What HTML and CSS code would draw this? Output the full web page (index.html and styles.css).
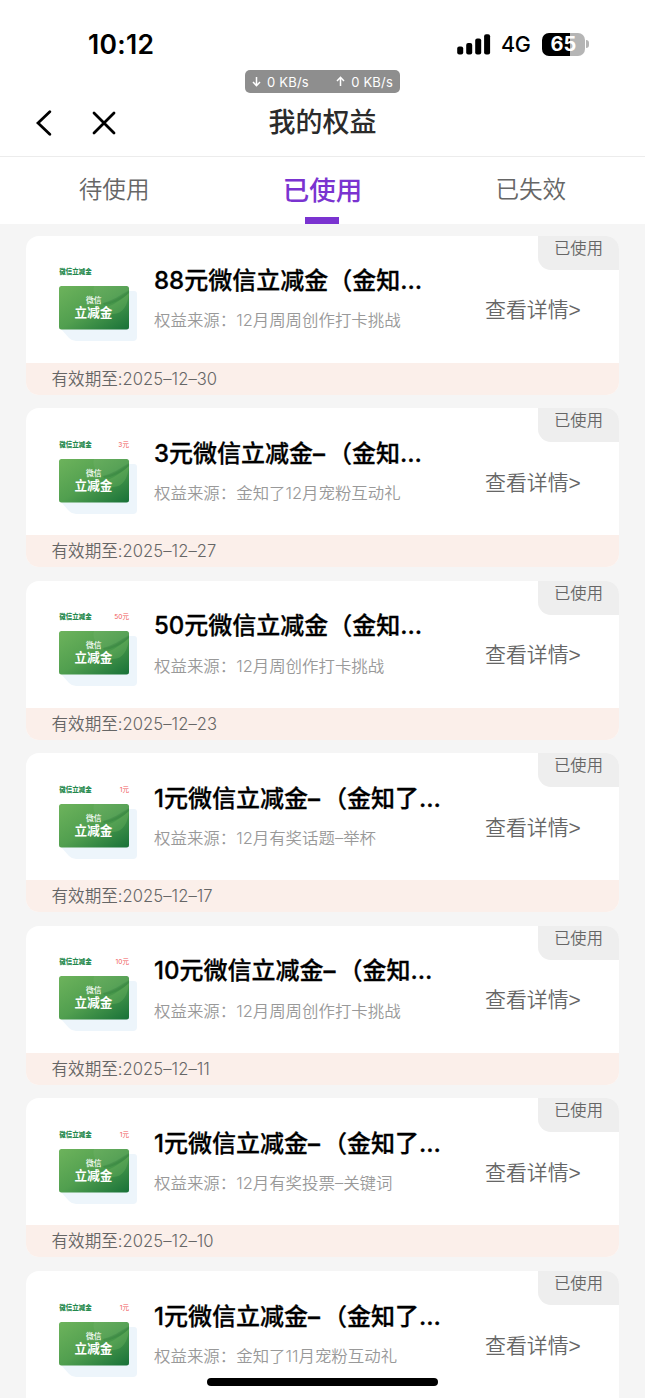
FILE: index.html
```html
<!DOCTYPE html>
<html lang="zh-CN">
<head>
  <meta charset="UTF-8" />
  <meta name="viewport" content="width=device-width, initial-scale=1.0" />
  <title>我的权益</title>
  <link rel="stylesheet" href="styles.css">
</head>
<body>

  <!-- Shared voucher artwork -->
  <svg class="defs" width="0" height="0">
    <defs>
      <linearGradient id="green" x1="0" y1="0" x2="1" y2="1">
        <stop offset="0" stop-color="#6db35c" />
        <stop offset="0.5" stop-color="#519f4f" />
        <stop offset="1" stop-color="#187138" />
      </linearGradient>
      <clipPath id="cardClip"><rect x="9" y="31" width="70" height="43.5" rx="2.5" /></clipPath>
      <symbol id="voucher" viewBox="0 0 96 96">
        <path d="M11 74 L79 36 H84 Q87 36 87 39 V82 Q87 86 83 86 H26 Q22 86 19 83 Z" fill="#edf5fb" />
        <rect x="9" y="31" width="70" height="43.5" rx="2.5" fill="url(#green)" />
        <g clip-path="url(#cardClip)">
          <path d="M44 31 C42 37 45 43 53 48 C60 48 68 44 79 36 V31 Z" fill="#ffffff" opacity="0.05" />
          <path d="M48 55 C58 53 69 47 79 38 C78 50 73 59 63 59 C57 60 52 58 48 55 Z" fill="#8dce72" opacity="0.22" />
          <path d="M53 48 C62 46 71 40 79 35 V38 C71 45 63 49 54 50 Z" fill="#16602e" opacity="0.18" />
        </g>
        <text x="9.2" y="19" class="v-label">微信立减金</text>
        <text x="43.7" y="48.4" class="v-small">微信</text>
        <text x="43.5" y="61.5" class="v-big">立减金</text>
      </symbol>
    </defs>
  </svg>

  <!-- Status bar -->
  <div class="status-bar">
    <span class="time">10:12</span>
    <div class="status-right">
      <svg class="signal" width="34" height="21" viewBox="0 0 34 21">
        <rect x="0.2" y="12.6" width="6" height="8" rx="2" />
        <rect x="9.2" y="9" width="6" height="11.6" rx="2" />
        <rect x="18.2" y="4.6" width="6" height="16" rx="2" />
        <rect x="27.1" y="0.2" width="6" height="20.4" rx="2" />
      </svg>
      <span class="network">4G</span>
      <div class="battery"><span>65</span></div>
      <div class="battery-cap"></div>
    </div>
  </div>

  <div class="speed">
    <span><svg width="9" height="11" viewBox="0 0 9 11"><path d="M4.5 1 V9.5 M1 6 L4.5 9.7 L8 6" /></svg>0 KB/s</span>
    <span><svg width="9" height="11" viewBox="0 0 9 11"><path d="M4.5 10 V1.5 M1 5 L4.5 1.3 L8 5" /></svg>0 KB/s</span>
  </div>

  <!-- Navigation -->
  <div class="navbar">
    <div class="nav-icons">
      <svg width="16" height="26" viewBox="0 0 16 26"><path d="M13.8 1.8 L2 13 L13.8 24.2" /></svg>
      <svg width="24" height="24" viewBox="0 0 24 24"><path d="M2 2 L22 22 M22 2 L2 22" /></svg>
    </div>
    <h1>我的权益</h1>
  </div>

  <div class="tabs">
    <div class="tab">待使用</div>
    <div class="tab active">已使用</div>
    <div class="tab">已失效</div>
  </div>

  <!-- Benefits list -->
  <div class="list">
    <div class="card">
      <div class="card-main">
        <svg class="voucher"><use href="#voucher" /></svg>
        <div class="info">
          <h2>88元微信立减金（金知…</h2>
          <p>权益来源：12月周周创作打卡挑战</p>
        </div>
        <div class="detail">查看详情<span>&gt;</span></div>
        <div class="badge">已使用</div>
      </div>
      <div class="card-foot">有效期至:<span>2025–12–30</span></div>
    </div>

    <div class="card">
      <div class="card-main">
        <svg class="voucher"><use href="#voucher" /><text x="79" y="19" class="v-price">3元</text></svg>
        <div class="info">
          <h2>3元微信立减金<span class="dash">–</span>（金知…</h2>
          <p>权益来源：金知了12月宠粉互动礼</p>
        </div>
        <div class="detail">查看详情<span>&gt;</span></div>
        <div class="badge">已使用</div>
      </div>
      <div class="card-foot">有效期至:<span>2025–12–27</span></div>
    </div>

    <div class="card">
      <div class="card-main">
        <svg class="voucher"><use href="#voucher" /><text x="79" y="19" class="v-price">50元</text></svg>
        <div class="info">
          <h2>50元微信立减金（金知…</h2>
          <p>权益来源：12月周创作打卡挑战</p>
        </div>
        <div class="detail">查看详情<span>&gt;</span></div>
        <div class="badge">已使用</div>
      </div>
      <div class="card-foot">有效期至:<span>2025–12–23</span></div>
    </div>

    <div class="card">
      <div class="card-main">
        <svg class="voucher"><use href="#voucher" /><text x="79" y="19" class="v-price">1元</text></svg>
        <div class="info">
          <h2>1元微信立减金<span class="dash">–</span>（金知了…</h2>
          <p>权益来源：12月有奖话题–举杯</p>
        </div>
        <div class="detail">查看详情<span>&gt;</span></div>
        <div class="badge">已使用</div>
      </div>
      <div class="card-foot">有效期至:<span>2025–12–17</span></div>
    </div>

    <div class="card">
      <div class="card-main">
        <svg class="voucher"><use href="#voucher" /><text x="79" y="19" class="v-price">10元</text></svg>
        <div class="info">
          <h2>10元微信立减金<span class="dash">–</span>（金知…</h2>
          <p>权益来源：12月周周创作打卡挑战</p>
        </div>
        <div class="detail">查看详情<span>&gt;</span></div>
        <div class="badge">已使用</div>
      </div>
      <div class="card-foot">有效期至:<span>2025–12–11</span></div>
    </div>

    <div class="card">
      <div class="card-main">
        <svg class="voucher"><use href="#voucher" /><text x="79" y="19" class="v-price">1元</text></svg>
        <div class="info">
          <h2>1元微信立减金<span class="dash">–</span>（金知了…</h2>
          <p>权益来源：12月有奖投票–关键词</p>
        </div>
        <div class="detail">查看详情<span>&gt;</span></div>
        <div class="badge">已使用</div>
      </div>
      <div class="card-foot">有效期至:<span>2025–12–10</span></div>
    </div>

    <div class="card last">
      <div class="card-main">
        <svg class="voucher"><use href="#voucher" /><text x="79" y="19" class="v-price">1元</text></svg>
        <div class="info">
          <h2>1元微信立减金<span class="dash">–</span>（金知了…</h2>
          <p>权益来源：金知了11月宠粉互动礼</p>
        </div>
        <div class="detail">查看详情<span>&gt;</span></div>
        <div class="badge">已使用</div>
      </div>
    </div>
  </div>

  <div class="home-bar"></div>

</body>
</html>
```
FILE: styles.css
```css
* {
  box-sizing: border-box;
}

body {
  margin: 0;
  height: 1398px;
  overflow: hidden;
  background: #f5f5f5;
  font-family: Inter, "Noto Sans CJK SC", sans-serif;
  font-weight: 350;
  color: #666;
}

svg {
  display: block;
}

.defs {
  position: absolute;
}

/* Status bar */
.status-bar {
  display: flex;
  justify-content: space-between;
  height: 70px;
  padding: 30px 56px 0 88px;
  background: #fff;
  color: #000;
}

.time {
  font-size: 26.5px;
  font-weight: 600;
  line-height: 29px;
  letter-spacing: 0.3px;
}

.status-right {
  display: flex;
  align-items: center;
  height: 28px;
}

.signal {
  margin-left: -1px;
}

.network {
  margin-left: 10px;
  width: 31px;
  font-size: 21.5px;
  letter-spacing: -0.3px;
  font-weight: 450;
}

.battery {
  margin-left: 10px;
  width: 43px;
  height: 23px;
  border-radius: 7px;
  background: linear-gradient(90deg, #000 65%, #b5b5b5 65%);
  color: #fff;
  font-size: 20px;
  font-weight: 700;
  line-height: 23px;
  text-align: center;
}

.battery-cap {
  margin-left: 1px;
  width: 3px;
  height: 8px;
  border-radius: 0 4px 4px 0;
  background: #b5b5b5;
}

/* Network speed pill floats above the nav */
.speed {
  position: absolute;
  top: 70px;
  left: 245px;
  display: flex;
  justify-content: space-between;
  align-items: center;
  width: 155px;
  height: 23px;
  padding: 0 7px;
  border-radius: 5px;
  background: #8e8e8e;
  color: #fff;
  font-size: 13px;
  font-weight: 400;
  letter-spacing: 0.2px;
}

.speed span {
  display: flex;
  align-items: center;
  gap: 6px;
}

.speed path {
  fill: none;
  stroke: #fff;
  stroke-width: 1.5;
}

/* Navigation */
.navbar {
  display: grid;
  grid-template-columns: 1fr auto 1fr;
  align-items: center;
  height: 87px;
  padding-top: 19px;
  background: #fff;
  border-bottom: 1px solid #ececec;
}

.nav-icons {
  display: flex;
  align-items: center;
  gap: 40px;
  padding-left: 36px;
}

.nav-icons path {
  fill: none;
  stroke: #000;
  stroke-width: 2.8;
  stroke-linecap: round;
}

h1 {
  margin: 0;
  padding-top: 1px;
  font-size: 27px;
  font-weight: 500;
  line-height: 40px;
  color: #2b2b2b;
}

.tabs {
  display: grid;
  grid-template-columns: repeat(3, 1fr);
  height: 67px;
  padding: 0 10px;
  background: #fff;
  text-align: center;
  font-size: 23.6px;
  line-height: 66px;
}

.tab.active {
  color: #7a33d0;
  font-size: 26.5px;
  font-weight: 500;
}

.tab.active::after {
  content: "";
  display: block;
  width: 34px;
  height: 7px;
  margin: -6px auto 0;
  background: #7a33d0;
}

/* Benefits list */
.list {
  display: flex;
  flex-direction: column;
  gap: 13.6px;
  padding: 11.5px 26px 0 25.5px;
}

.card {
  flex: none;
  overflow: hidden;
  border-radius: 13px;
  background: #fff;
}

.card.last {
  border-radius: 13px 13px 0 0;
}

.card-main {
  position: relative;
  display: flex;
  height: 127px;
  padding-left: 24.5px;
}

.voucher {
  flex: none;
  width: 96px;
  height: 96px;
  margin-top: 19.5px;
}

.v-label {
  font-size: 6.5px;
  font-weight: 900;
  fill: #23884c;
}

.v-price {
  font-size: 6.6px;
  font-weight: 400;
  text-anchor: end;
  fill: #f05b5b;
}

.v-small {
  font-size: 7.8px;
  font-weight: 500;
  text-anchor: middle;
  fill: #fff;
}

.v-big {
  font-size: 12.6px;
  font-weight: 700;
  text-anchor: middle;
  fill: #fff;
}

.info {
  flex: none;
  width: 339px;
  padding: 27.5px 0 0 8px;
  white-space: nowrap;
}

h2 {
  margin: 0;
  font-size: 24px;
  font-weight: 500;
  line-height: 36px;
  color: #000;
  -webkit-text-stroke: 0.3px #000;
}

.dash {
  display: inline-block;
  width: 15px;
}

p {
  margin: 8.4px 0 0;
  font-size: 16.45px;
  line-height: 26px;
  color: #999;
}

.detail {
  padding-top: 58.5px;
  font-size: 20.9px;
  line-height: 32px;
  white-space: nowrap;
}

.detail span {
  font-family: "Liberation Sans", sans-serif;
}

.badge {
  position: absolute;
  top: 0;
  right: 0;
  width: 81px;
  height: 34px;
  border-radius: 0 0 0 13px;
  background: #eee;
  font-size: 16.3px;
  line-height: 25px;
  text-align: center;
}

.card-foot {
  height: 32px;
  padding-left: 26px;
  background: #fbefea;
  font-size: 16.6px;
  line-height: 33.6px;
}

.card-foot span {
  letter-spacing: 0.05px;
}

.home-bar {
  position: fixed;
  left: 207px;
  bottom: 12px;
  width: 231px;
  height: 8px;
  border-radius: 4px;
  background: #000;
}
```
